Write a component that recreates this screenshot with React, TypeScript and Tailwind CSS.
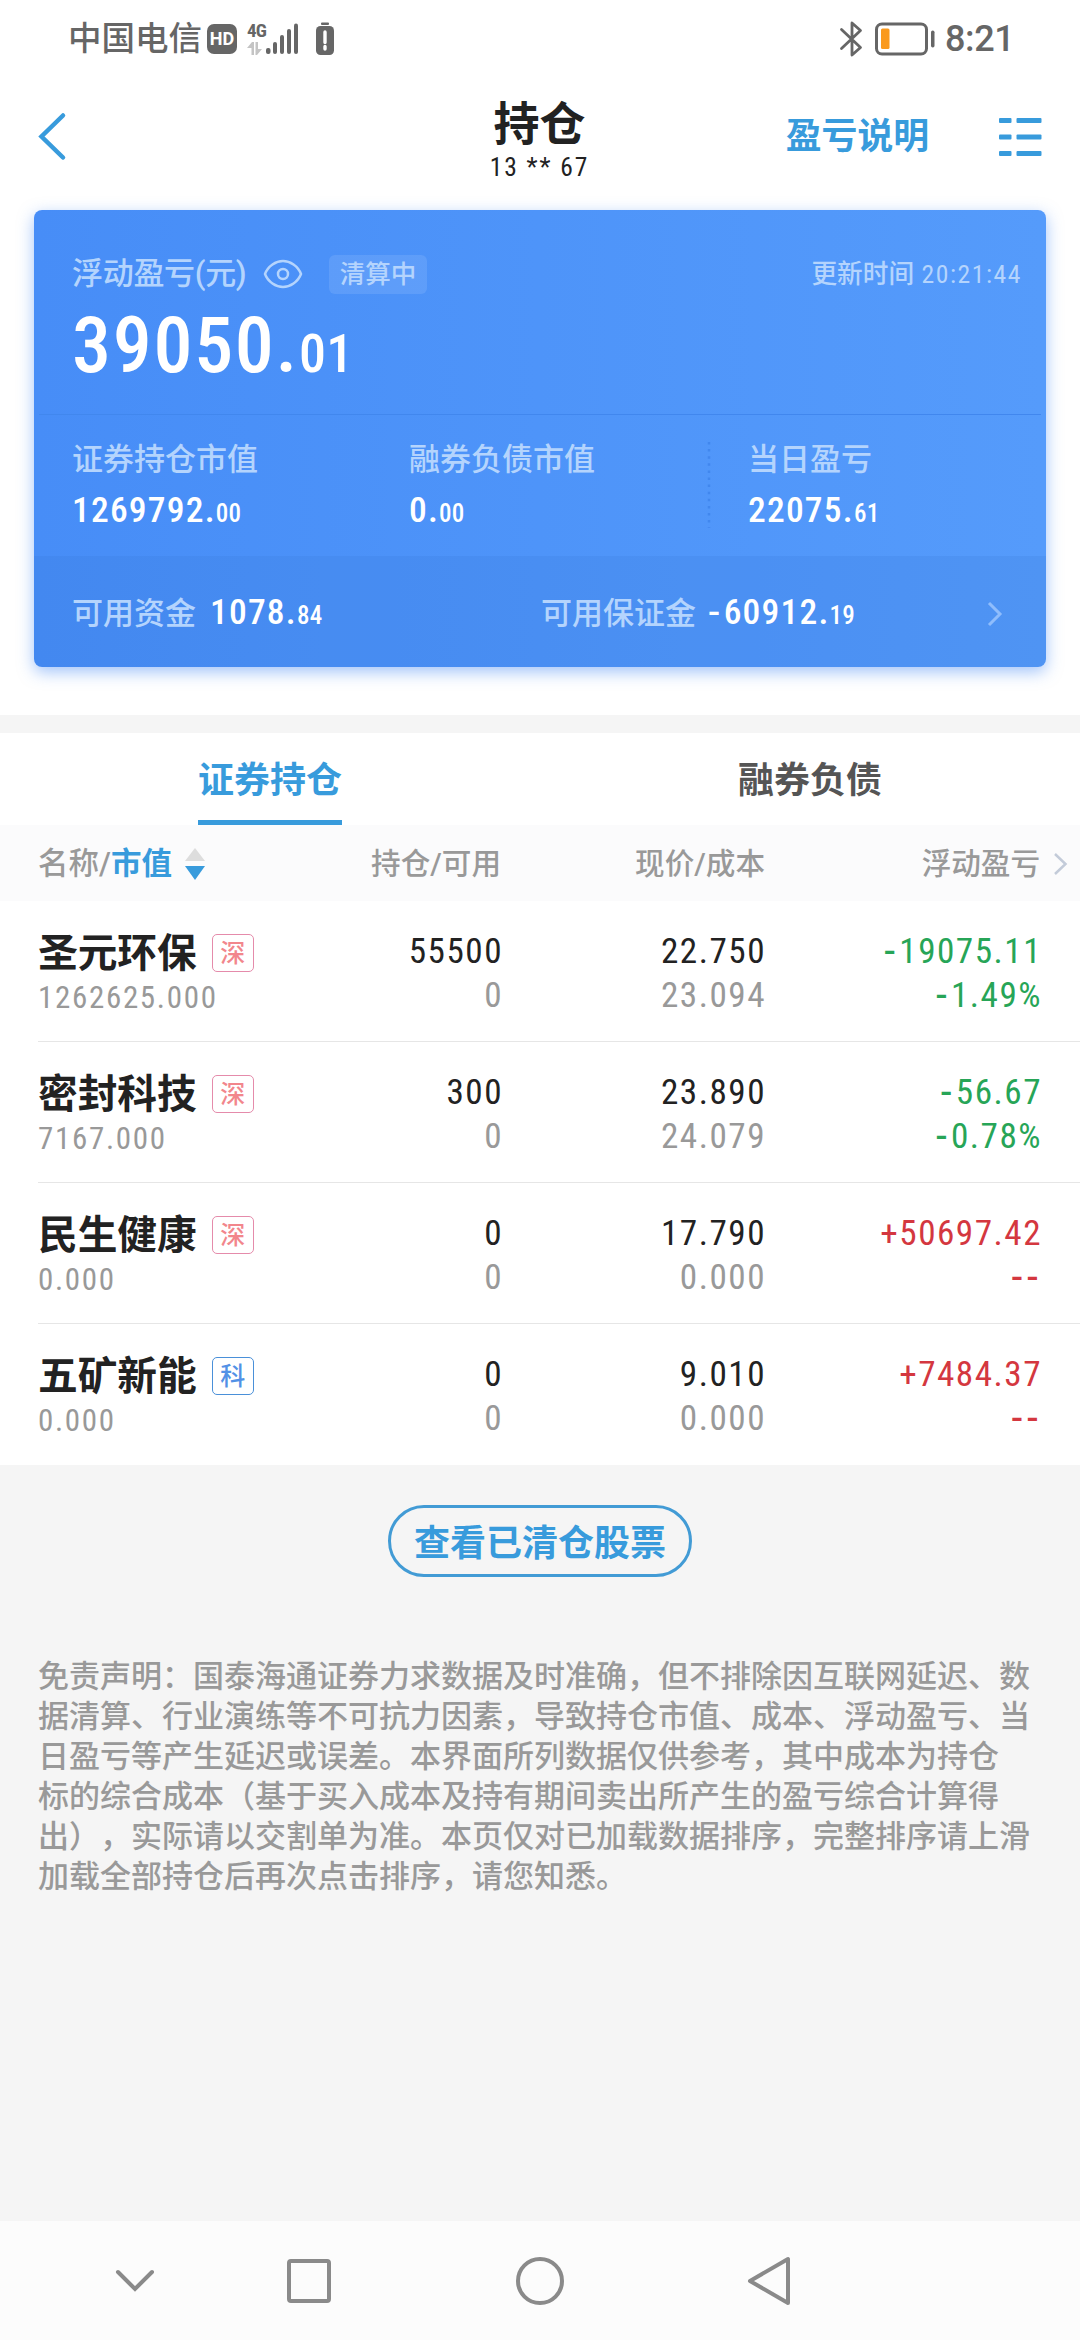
import clsx from "clsx";

type Holding = {
  name: string;
  market: string;
  marketValue: string;
  position: string;
  available: string;
  price: string;
  cost: string;
  profit: string;
  rate: string;
  trend: "up" | "down";
};

const holdings: Holding[] = [
  {
    name: "圣元环保",
    market: "深",
    marketValue: "1262625.000",
    position: "55500",
    available: "0",
    price: "22.750",
    cost: "23.094",
    profit: "-19075.11",
    rate: "-1.49%",
    trend: "down",
  },
  {
    name: "密封科技",
    market: "深",
    marketValue: "7167.000",
    position: "300",
    available: "0",
    price: "23.890",
    cost: "24.079",
    profit: "-56.67",
    rate: "-0.78%",
    trend: "down",
  },
  {
    name: "民生健康",
    market: "深",
    marketValue: "0.000",
    position: "0",
    available: "0",
    price: "17.790",
    cost: "0.000",
    profit: "+50697.42",
    rate: "--",
    trend: "up",
  },
  {
    name: "五矿新能",
    market: "科",
    marketValue: "0.000",
    position: "0",
    available: "0",
    price: "9.010",
    cost: "0.000",
    profit: "+7484.37",
    rate: "--",
    trend: "up",
  },
];

const disclaimer = [
  "免责声明：国泰海通证券力求数据及时准确，但不排除因互联网延迟、数",
  "据清算、行业演练等不可抗力因素，导致持仓市值、成本、浮动盈亏、当",
  "日盈亏等产生延迟或误差。本界面所列数据仅供参考，其中成本为持仓",
  "标的综合成本（基于买入成本及持有期间卖出所产生的盈亏综合计算得",
  "出），实际请以交割单为准。本页仅对已加载数据排序，完整排序请上滑",
  "加载全部持仓后再次点击排序，请您知悉。",
];

function StatusBar() {
  return (
    <div className="flex h-[78px] shrink-0 items-center pl-[68px] pr-[69px] text-[#666]">
      <span className="w-[139px] text-[33.5px] leading-[40px] font-medium whitespace-nowrap">中国电信</span>
      <span className="flex h-[30px] w-[30px] items-center justify-center rounded-[7px] bg-[#666] text-[18px] leading-none font-bold text-white">
        HD
      </span>
      <div className="ml-[10px] flex h-[32px] w-[19px] flex-col justify-between">
        <span className="text-[19px] leading-[15px] font-bold tracking-[-0.04em] [font-stretch:75%]">4G</span>
        <svg width="16" height="13" viewBox="0 0 16 13" fill="#c4c4c4">
          <path d="M0 6 5 0h2v13H4.500V6zM15 7l-5 6H8.500V0H11v7z" />
        </svg>
      </div>
      <svg className="-ml-[1px]" width="34" height="32" viewBox="0 0 34 32" fill="#666">
        <rect x="1" y="25" width="4.500" height="6" rx="2" />
        <rect x="8" y="19" width="4" height="12" rx="2" />
        <rect x="15" y="12" width="4" height="19" rx="2" />
        <rect x="22" y="6" width="4" height="25" rx="2" />
        <rect x="29" y="0.500" width="4" height="30.500" rx="2" />
      </svg>
      <svg className="ml-[16px]" width="20" height="34" viewBox="0 0 20 34">
        <rect x="6" y="0.500" width="8" height="2.500" rx="1" fill="#666" />
        <rect x="1" y="4" width="18" height="29" rx="4.500" fill="#666" />
        <path d="M10 10v10.500M10 24.500v2.500" stroke="#fff" strokeWidth="3.400" strokeLinecap="round" />
      </svg>

      <div className="ml-auto flex items-center">
        <svg
          width="24"
          height="36"
          viewBox="0 0 24 36"
          fill="none"
          stroke="#666"
          strokeWidth="2.800"
          strokeLinecap="round"
          strokeLinejoin="round"
        >
          <path d="m2.500 8.500 19 18-8.500 7.500V2l8.500 7.500-19 18" />
        </svg>
        <svg className="ml-[11px]" width="62" height="34" viewBox="0 0 62 34" fill="none">
          <rect x="2.500" y="2" width="50" height="30" rx="5.500" stroke="#666" strokeWidth="3" />
          <rect x="7" y="6.500" width="8.500" height="20.500" rx="1.500" fill="#fa9a1e" />
          <rect x="57" y="8.500" width="3.500" height="17" rx="1.700" fill="#666" />
        </svg>
        <span className="ml-[9px] w-[66px] text-[36px] leading-[40px] font-medium tracking-[-0.01em] whitespace-nowrap">
          8:21
        </span>
      </div>
    </div>
  );
}

function Header() {
  return (
    <div className="grid h-[132px] shrink-0 grid-cols-[1fr_auto_1fr] pr-[38px] pl-[37px]">
      <svg className="mt-[33px]" width="30" height="50" viewBox="0 0 30 50" fill="none">
        <path d="M26 4.500 4.500 25.500 26 46.500" stroke="#389bdc" strokeWidth="4.500" strokeLinecap="round" />
      </svg>
      <div className="flex flex-col items-center pt-[22px] text-[#222]">
        <span className="text-[46px] leading-[48px] font-bold">持仓</span>
        <span className="mt-[4px] text-[25.5px] leading-[30px] tracking-[0.075em] [font-stretch:75%]">13 ** 67</span>
      </div>
      <div className="flex h-[118px] items-center justify-end gap-[69px]">
        <span className="text-[35.8px] leading-[40px] font-bold text-[#389bdc]">盈亏说明</span>
        <svg width="44" height="40" viewBox="0 0 44 40" fill="#389bdc">
          {[1, 17.5, 34].map((y) => (
            <g key={y}>
              <rect x="1" y={y} width="12.500" height="5" rx="1" />
              <rect x="18.500" y={y} width="25" height="5" rx="1" />
            </g>
          ))}
        </svg>
      </div>
    </div>
  );
}

function Amount({ value }: { value: string }) {
  const [whole, cents] = value.split(".");
  return (
    <span className="text-[35.5px] leading-[40px] font-medium tracking-[0.034em] whitespace-nowrap text-white [font-stretch:75%]">
      {whole.startsWith("-") && <span className="tracking-[0.1em] [font-stretch:100%]">-</span>}
      {whole.replace("-", "")}.<span className="text-[25px] tracking-[0.01em]">{cents}</span>
    </span>
  );
}

function SummaryItem({ label, value, className }: { label: string; value: string; className: string }) {
  return (
    <div className={clsx("flex flex-col pt-[25px]", className)}>
      <span className="text-[31px] leading-[40px] font-medium text-[#b4d4fd]">{label}</span>
      <span className="mt-[10px] flex">
        <Amount value={value} />
      </span>
    </div>
  );
}

function SummaryCard() {
  return (
    <div className="mx-[34px] flex h-[457px] shrink-0 flex-col rounded-[8px] bg-gradient-to-r from-[#478df7] to-[#559bfb] shadow-[0_5px_16px_rgba(70,137,245,0.5)]">
      <div className="mx-[5px] h-[205px] border-b border-[#4187ee] pt-[44px] pr-[19px] pl-[33px]">
        <div className="flex h-[40px] items-center text-[#b4d4fd]">
          <span className="w-[173px] text-[31px] leading-[40px] font-medium tracking-[-0.01em] whitespace-nowrap">
            浮动盈亏(元)
          </span>
          <svg className="ml-[18px]" width="40" height="30" viewBox="0 0 40 30" fill="none" stroke="#b4d4fd" strokeWidth="2.500">
            <path d="M2 15C5 7 13 2 20 2s15 5 18 13c-3 8-11 13-18 13S5 23 2 15Z" strokeLinejoin="round" />
            <circle cx="20" cy="15" r="5" />
          </svg>
          <span className="ml-[26px] flex h-[39px] w-[98px] items-center justify-center rounded-[6px] bg-white/10 pt-[2px] text-[25.5px] leading-none font-medium">
            清算中
          </span>
          <span className="ml-auto text-[25.7px] leading-[40px] tracking-[0.06em] [font-stretch:75%]">
            <span className="font-medium tracking-normal">更新时间</span> 20:21:44
          </span>
        </div>
        <div className="mt-[12px] text-[78px] leading-[80px] font-medium tracking-[0.022em] text-white [font-stretch:75%]">
          39050.<span className="text-[54px] tracking-[0.005em]">01</span>
        </div>
      </div>

      <div className="flex h-[141px] pl-[38px]">
        <SummaryItem label="证券持仓市值" value="1269792.00" className="w-[337px]" />
        <SummaryItem label="融券负债市值" value="0.00" className="w-[298px]" />
        <svg className="mt-[25px]" width="4" height="90" viewBox="0 0 4 90">
          <path d="M2 2v86" stroke="#4187ee" strokeWidth="2.500" strokeDasharray="2.500 4.600" />
        </svg>
        <SummaryItem label="当日盈亏" value="22075.61" className="ml-[37px]" />
      </div>

      <div className="flex flex-1 items-center rounded-b-[8px] bg-[#3878d8]/20 pt-[4px] pr-[42px] pl-[38px]">
        <div className="flex w-[469px] items-center gap-[14px]">
          <span className="text-[31px] leading-[40px] font-medium text-[#b4d4fd]">可用资金</span>
          <Amount value="1078.84" />
        </div>
        <div className="flex items-center gap-[12px]">
          <span className="text-[31px] leading-[40px] font-medium text-[#b4d4fd]">可用保证金</span>
          <Amount value="-60912.19" />
        </div>
        <svg className="ml-auto" width="19" height="28" viewBox="0 0 19 28" fill="none">
          <path d="m4 3 11 11L4 25" stroke="#8fbdfc" strokeWidth="3" />
        </svg>
      </div>
    </div>
  );
}

function Tabs() {
  return (
    <div className="grid h-[92px] shrink-0 grid-cols-2 bg-white text-[36px] font-bold">
      <div className="flex justify-center">
        <span className="border-b-[5px] border-[#389bdc] pt-[26px] leading-[44px] text-[#389bdc]">证券持仓</span>
      </div>
      <div className="flex justify-center">
        <span className="pt-[26px] leading-[44px] text-[#555]">融券负债</span>
      </div>
    </div>
  );
}

function ListHeader() {
  return (
    <div className="flex h-[76px] shrink-0 items-center bg-[#fbfbfc] pt-[2px] pl-[38px] text-[29.6px] leading-[40px] font-medium text-[#999]">
      <div className="flex w-[200px] items-center text-[30.5px] whitespace-nowrap">
        <span>
          名称/<span className="font-bold text-[#389bdc]">市值</span>
        </span>
        <svg className="ml-[13px]" width="20" height="34" viewBox="0 0 20 34">
          <path d="M10 1 20 14H0z" fill="#ddd" />
          <path d="M0 19h20L10 33z" fill="#389bdc" />
        </svg>
      </div>
      <span className="w-[263px] text-right">持仓/可用</span>
      <span className="w-[264px] text-right">现价/成本</span>
      <span className="w-[275px] text-right">浮动盈亏</span>
      <svg className="ml-[12px]" width="18" height="24" viewBox="0 0 18 24" fill="none">
        <path d="m3 2 10.500 10L3 22" stroke="#c3cbd9" strokeWidth="2.500" />
      </svg>
    </div>
  );
}

function Figure({ value, className }: { value: string; className?: string }) {
  const digits = value.replace(/^-+/, "");
  const dashes = value.slice(0, value.length - digits.length);

  return (
    <span className={className}>
      {dashes && <span className="font-medium tracking-[0.1em] [font-stretch:100%]">{dashes}</span>}
      {digits}
    </span>
  );
}

function Cell({
  top,
  bottom,
  className,
  bottomClassName,
}: {
  top: string;
  bottom: string;
  className: string;
  bottomClassName?: string;
}) {
  return (
    <div
      className={clsx(
        "flex flex-col pt-[28px] text-right text-[35.2px] leading-[44px] font-[450] tracking-[0.042em] [font-stretch:75%]",
        className
      )}
    >
      <Figure value={top} />
      <Figure value={bottom} className={bottomClassName} />
    </div>
  );
}

function HoldingRow({ holding, last }: { holding: Holding; last: boolean }) {
  const profitColor = holding.trend === "up" ? "text-[#d4373f]" : "text-[#27a557]";

  return (
    <div className={clsx("ml-[38px] flex h-[141px] shrink-0", !last && "border-b border-[#e6e6e6]")}>
      <div className="w-[230px] pt-[28px]">
        <div className="flex h-[48px] items-center whitespace-nowrap">
          <span className="pt-[2px] text-[39.7px] leading-[48px] font-bold text-[#222]">{holding.name}</span>
          <span
            className={clsx(
              "ml-[15px] flex h-[38px] w-[42px] shrink-0 items-center justify-center rounded-[5px] border text-[25px] leading-none font-medium",
              holding.market === "科" ? "border-[#4a90d9] text-[#5291e6]" : "border-[#e58bab] text-[#f2868c]"
            )}
          >
            {holding.market}
          </span>
        </div>
        <div className="pt-[1px] text-[31px] leading-[40px] tracking-[0.054em] text-[#999] [font-stretch:75%]">
          {holding.marketValue}
        </div>
      </div>
      <Cell top={holding.position} bottom={holding.available} className="w-[235px] text-[#222]" bottomClassName="text-[#999]" />
      <Cell top={holding.price} bottom={holding.cost} className="w-[263px] text-[#222]" bottomClassName="text-[#999]" />
      <Cell top={holding.profit} bottom={holding.rate} className={clsx("w-[276px]", profitColor)} />
    </div>
  );
}

function NavigationBar() {
  return (
    <div className="mt-auto flex h-[119px] shrink-0 items-center bg-[#fcfcfc] pl-[114px]">
      <svg width="42" height="50" viewBox="0 0 42 50" fill="none" stroke="#8a8a8a" strokeWidth="4" strokeLinecap="round">
        <path d="m4 16 17 17 17-17" />
      </svg>
      <svg className="ml-[128px]" width="50" height="50" viewBox="0 0 50 50" fill="none" stroke="#8a8a8a" strokeWidth="4">
        <rect x="5" y="5" width="40" height="40" rx="2" />
      </svg>
      <svg className="ml-[181px]" width="50" height="50" viewBox="0 0 50 50" fill="none" stroke="#8a8a8a" strokeWidth="4">
        <circle cx="25" cy="25" r="22" />
      </svg>
      <svg
        className="ml-[180px]"
        width="50"
        height="50"
        viewBox="0 0 50 50"
        fill="none"
        stroke="#8a8a8a"
        strokeWidth="4"
        strokeLinejoin="round"
      >
        <path d="M43 3v44L5 25z" />
      </svg>
    </div>
  );
}

export default function App() {
  return (
    <div className="flex h-[2340px] w-[1080px] flex-col overflow-hidden bg-[#f5f5f5] font-['Roboto','Noto_Sans_CJK_SC',sans-serif] [text-spacing-trim:space-all]">
      <div className="flex h-[715px] shrink-0 flex-col bg-white">
        <StatusBar />
        <Header />
        <SummaryCard />
      </div>

      <div className="mt-[18px] flex flex-col bg-white">
        <Tabs />
        <ListHeader />
        {holdings.map((holding, index) => (
          <HoldingRow key={holding.name} holding={holding} last={index === holdings.length - 1} />
        ))}
      </div>

      <button className="mt-[40px] h-[72px] w-[304px] self-center rounded-full border-[3px] border-[#429bd5] pt-[6px] text-[36px] leading-none font-bold text-[#389bdc]">
        查看已清仓股票
      </button>

      <div className="mt-[80px] ml-[38px] text-[31px] leading-[40px] font-medium whitespace-nowrap text-[#999]">
        {disclaimer.map((line) => (
          <p key={line}>{line}</p>
        ))}
      </div>

      <NavigationBar />
    </div>
  );
}
